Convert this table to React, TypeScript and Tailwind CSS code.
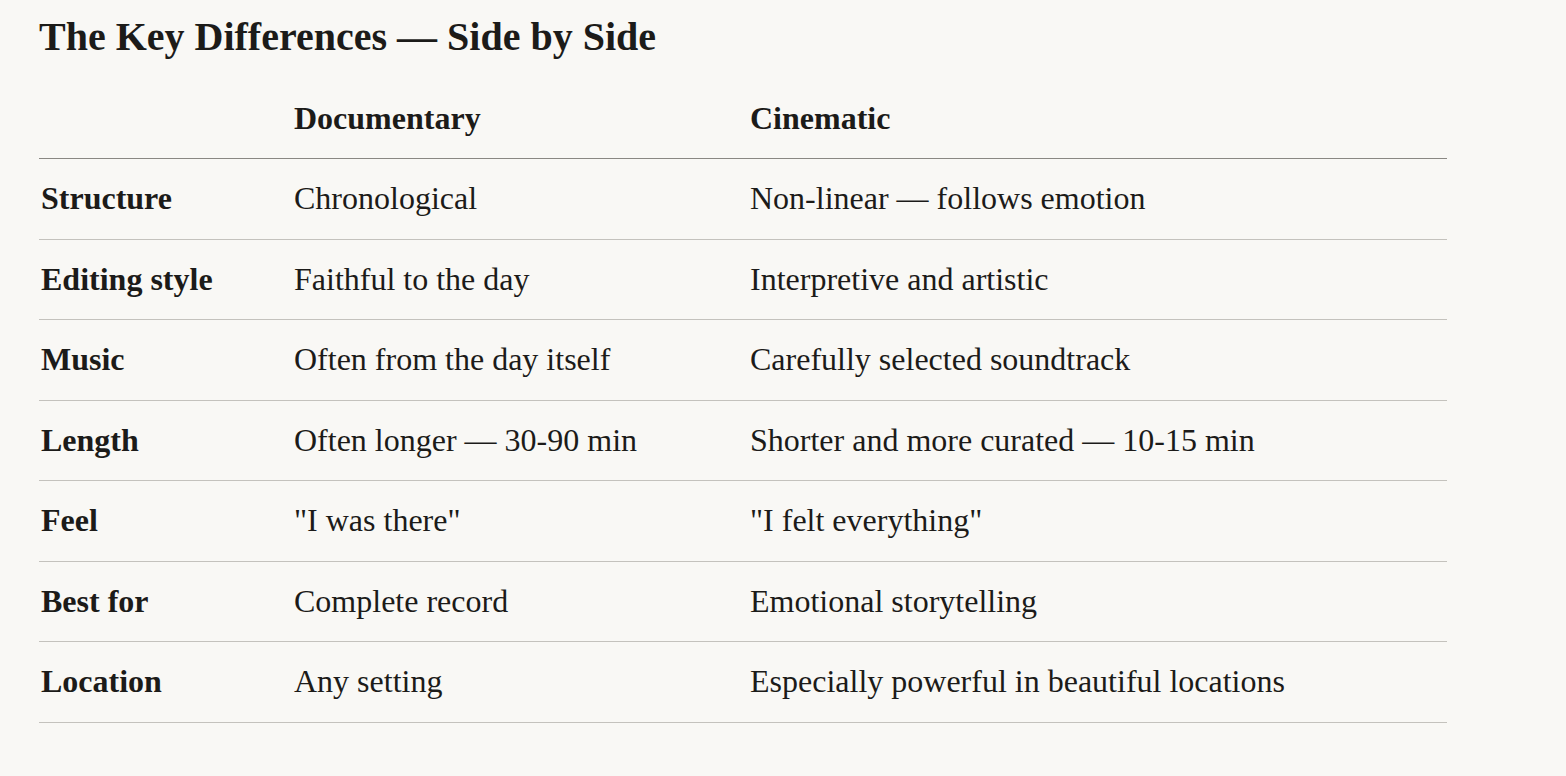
const rows: [string, string, string][] = [
  ["Structure", "Chronological", "Non-linear — follows emotion"],
  ["Editing style", "Faithful to the day", "Interpretive and artistic"],
  ["Music", "Often from the day itself", "Carefully selected soundtrack"],
  ["Length", "Often longer — 30-90 min", "Shorter and more curated — 10-15 min"],
  ["Feel", '"I was there"', '"I felt everything"'],
  ["Best for", "Complete record", "Emotional storytelling"],
  ["Location", "Any setting", "Especially powerful in beautiful locations"],
];

export default function App() {
  return (
    <div className="min-h-[776px] bg-[#f9f8f5] text-[#1c1b19] font-['Liberation_Serif',serif] px-[39px] pt-[12px]">
      <h2 className="text-[40px] leading-[50px] font-bold">
        The Key Differences — Side by Side
      </h2>

      <div className="mt-[16px] w-[1408px] text-[32px]">
        {/* header */}
        <div className="grid grid-cols-[255px_456px_1fr] border-b border-[#8a8883] py-4 leading-[48px] font-bold">
          <div />
          <div>Documentary</div>
          <div>Cinematic</div>
        </div>

        {rows.map(([label, doc, cine]) => (
          <div
            key={label}
            className="grid grid-cols-[255px_456px_1fr] border-b border-[#c4c2bd] py-4 leading-[47.5px]"
          >
            <div className="pl-[2px] font-bold">{label}</div>
            <div>{doc}</div>
            <div>{cine}</div>
          </div>
        ))}
      </div>
    </div>
  );
}
